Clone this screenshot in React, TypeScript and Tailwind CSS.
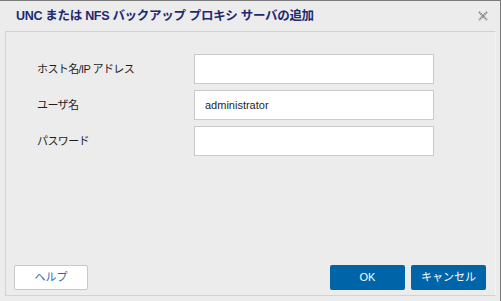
import React from 'react';

const fields = [
  { label: 'ホスト名/IP アドレス', value: '' },
  { label: 'ユーザ名', value: 'administrator' },
  { label: 'パスワード', value: '' },
];

const font = { fontFamily: '"Liberation Sans", "Noto Sans CJK JP", sans-serif' };

const App: React.FC = () => {
  return (
    <div
      className="w-[501px] h-[301px] bg-[#ececec] border-t border-r border-[#7a7a7a] flex flex-col"
      style={font}
    >
      {/* Title bar */}
      <div className="h-[30px] flex items-center justify-between pl-[16px] pr-[12px] shrink-0">
        <h1 className="text-[12.5px] tracking-[-0.3px] font-bold text-[#1c2a72] leading-none">
          UNC または NFS バックアップ プロキシ サーバの追加
        </h1>
        <button className="w-[10px] h-[10px] flex items-center justify-center">
          <svg width="10" height="10" viewBox="0 0 10 10">
            <path d="M1 1 L9 9 M9 1 L1 9" stroke="#858585" strokeWidth="2" strokeDasharray="1.5 0.6" />
          </svg>
        </button>
      </div>

      {/* Body */}
      <div className="flex-1 pl-[5px] pr-[4px] pb-[5px] flex">
        <div className="flex-1 border border-[#d2d2d2] border-r-[#f4f4f4] flex flex-col pt-[22px] pb-[5px] pl-[8px] pr-[9px]">
          <div className="flex flex-col gap-[6px]">
            {fields.map(f => (
              <div key={f.label} className="flex items-center">
                <label className="w-[180px] pl-[23px] text-[11px] tracking-[-0.6px] text-[#1e1e1e]">{f.label}</label>
                <input
                  readOnly
                  value={f.value}
                  className="w-[240px] h-[30px] bg-white border border-[#cacaca] px-[10px] text-[11px] text-[#1e1e1e] outline-none"
                  style={font}
                  type={f.label === 'パスワード' ? 'password' : 'text'}
                />
              </div>
            ))}
          </div>

          <div className="mt-auto flex items-center">
            <button className="w-[74px] h-[25px] bg-white border border-[#c8c8c8] rounded-[2px] text-[11px] text-[#1a6cb2]">
              ヘルプ
            </button>
            <div className="ml-auto flex gap-[6px]">
              <button className="w-[75px] h-[25px] bg-[#0064a8] rounded-[2px] text-[11px] text-white">
                OK
              </button>
              <button className="w-[75px] h-[25px] bg-[#0064a8] rounded-[2px] text-[11px] text-white">
                キャンセル
              </button>
            </div>
          </div>
        </div>
      </div>
    </div>
  );
};

export default App;
